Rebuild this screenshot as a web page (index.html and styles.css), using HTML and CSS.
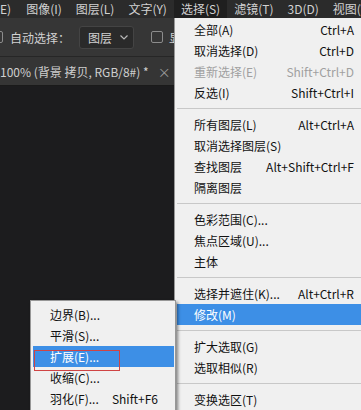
FILE: index.html
```html
<!DOCTYPE html>
<html lang="zh-CN">
<head>
    <meta charset="UTF-8">
    <meta name="viewport" content="width=device-width, initial-scale=1.0">
    <title>选择 菜单</title>
    <link rel="stylesheet" href="styles.css">
</head>
<body>
    <div class="app">
        <div class="menubar">
            <span class="mb-item first">E)</span>
            <span class="mb-item">图像(I)</span>
            <span class="mb-item">图层(L)</span>
            <span class="mb-item">文字(Y)</span>
            <span class="mb-item active">选择(S)</span>
            <span class="mb-item">滤镜(T)</span>
            <span class="mb-item">3D(D)</span>
            <span class="mb-item">视图(V)</span>
        </div>

        <div class="toolbar">
            <span class="checkbox cut"></span>
            <span class="tb-label">自动选择：</span>
            <span class="select">
                图层
                <svg class="chevron" width="8" height="5" viewBox="0 0 8 5">
                    <path d="M0.5 0.5 L4 4 L7.5 0.5" fill="none" stroke="#b8b8b8" stroke-width="1.2"/>
                </svg>
            </span>
            <span class="checkbox"></span>
            <span class="tb-label">显示变换控件</span>
        </div>

        <div class="tabs">
            <div class="tab">
                <span>100% (背景 拷贝, RGB/8#) *</span>
                <span class="close">×</span>
            </div>
        </div>

        <div class="canvas"></div>

        <!-- 选择 menu -->
        <ul class="menu main">
            <li class="item"><span>全部(A)</span><span>Ctrl+A</span></li>
            <li class="item"><span>取消选择(D)</span><span>Ctrl+D</span></li>
            <li class="item disabled"><span>重新选择(E)</span><span>Shift+Ctrl+D</span></li>
            <li class="item"><span>反选(I)</span><span>Shift+Ctrl+I</span></li>
            <li class="sep"></li>
            <li class="item"><span>所有图层(L)</span><span>Alt+Ctrl+A</span></li>
            <li class="item"><span>取消选择图层(S)</span></li>
            <li class="item"><span>查找图层</span><span>Alt+Shift+Ctrl+F</span></li>
            <li class="item"><span>隔离图层</span></li>
            <li class="sep"></li>
            <li class="item"><span>色彩范围(C)...</span></li>
            <li class="item"><span>焦点区域(U)...</span></li>
            <li class="item"><span>主体</span></li>
            <li class="sep"></li>
            <li class="item"><span>选择并遮住(K)...</span><span>Alt+Ctrl+R</span></li>
            <li class="item hl"><span>修改(M)</span></li>
            <li class="sep"></li>
            <li class="item"><span>扩大选取(G)</span></li>
            <li class="item"><span>选取相似(R)</span></li>
            <li class="sep"></li>
            <li class="item"><span>变换选区(T)</span></li>
        </ul>

        <!-- 修改 submenu -->
        <ul class="menu sub">
            <li class="item"><span>边界(B)...</span></li>
            <li class="item"><span>平滑(S)...</span></li>
            <li class="item hl"><span>扩展(E)...</span></li>
            <li class="item"><span>收缩(C)...</span></li>
            <li class="item"><span>羽化(F)...</span><span>Shift+F6</span></li>
            <li class="mark"></li>
        </ul>
    </div>
</body>
</html>
```

FILE: styles.css
```css
body {
    margin: 0;
    background: #1c1c1e;
}
.app {
    position: relative;
    width: 361px;
    height: 410px;
    overflow: hidden;
    display: flex;
    flex-direction: column;
    background: #1c1c1e;
    font-family: "Noto Sans CJK SC", "Noto Sans", sans-serif;
    font-size: 12px;
}

/* menu bar */
.menubar {
    height: 18px;
    flex: none;
    display: flex;
    align-items: center;
    background: #2b2b2b;
    color: #d2d2d2;
    line-height: 18px;
    white-space: nowrap;
}
.mb-item {
    padding: 0 7px;
}
.mb-item.first {
    padding-left: 0;
    padding-right: 8px;
}
.mb-item.active {
    background: #1f1f1f;
}

/* options bar */
.toolbar {
    height: 38px;
    flex: none;
    display: flex;
    align-items: center;
    background: #363636;
    border-bottom: 1px solid #262626;
    color: #d2d2d2;
    white-space: nowrap;
}
.checkbox {
    width: 10px;
    height: 10px;
    border: 1px solid #8c8c8c;
    border-radius: 2px;
    flex: none;
}
.checkbox.cut {
    margin-left: -9px;
    margin-right: 7px;
}
.select {
    margin-left: 9px;
    width: 40px;
    height: 21px;
    padding: 0 5px 0 8px;
    display: flex;
    align-items: center;
    justify-content: space-between;
    background: #2a2a2a;
    border: 1px solid #444;
    border-radius: 3px;
    flex: none;
}
.select + .checkbox {
    margin-left: 17px;
    margin-right: 6px;
}

/* document tabs */
.tabs {
    height: 28px;
    flex: none;
    display: flex;
    background: #2a2a2a;
    border-bottom: 1px solid #1a1a1a;
}
.tab {
    display: flex;
    align-items: center;
    gap: 9px;
    padding: 0 10px 0 0;
    background: #353535;
    color: #cfcfcf;
    white-space: nowrap;
}
.close {
    color: #9a9a9a;
    font-size: 13px;
}
.canvas {
    flex: 1;
    background: #1c1c1e;
}

/* dropdown menus */
.menu {
    position: absolute;
    margin: 0;
    list-style: none;
    background: #f0f0f0;
    border: 1px solid #979797;
    color: #111;
    white-space: nowrap;
}
.menu.main {
    left: 174px;
    top: 18px;
    width: 194px;
    padding: 1px 2px 0 2px;
    border-top: none;
}
.menu.sub {
    left: 30px;
    top: 300px;
    width: 141px;
    padding: 3px 1px 4px 2px;
    box-shadow: 2px 2px 3px rgba(0, 0, 0, 0.45);
}
.item {
    height: 21px;
    line-height: 21px;
    padding: 0 17px;
    display: flex;
    justify-content: space-between;
}
.sub .item {
    padding: 0 16px 0 17px;
}
.item.hl {
    background: #3d8fe6;
    color: #fff;
}
.item.disabled {
    color: #a0a0a0;
}
.sep {
    height: 1px;
    margin: 5px 0;
    background: #c8c8c8;
}
.mark {
    position: absolute;
    left: 3px;
    top: 49px;
    width: 86px;
    height: 21px;
    box-sizing: border-box;
    border: 1px solid #cf4444;
}
```
